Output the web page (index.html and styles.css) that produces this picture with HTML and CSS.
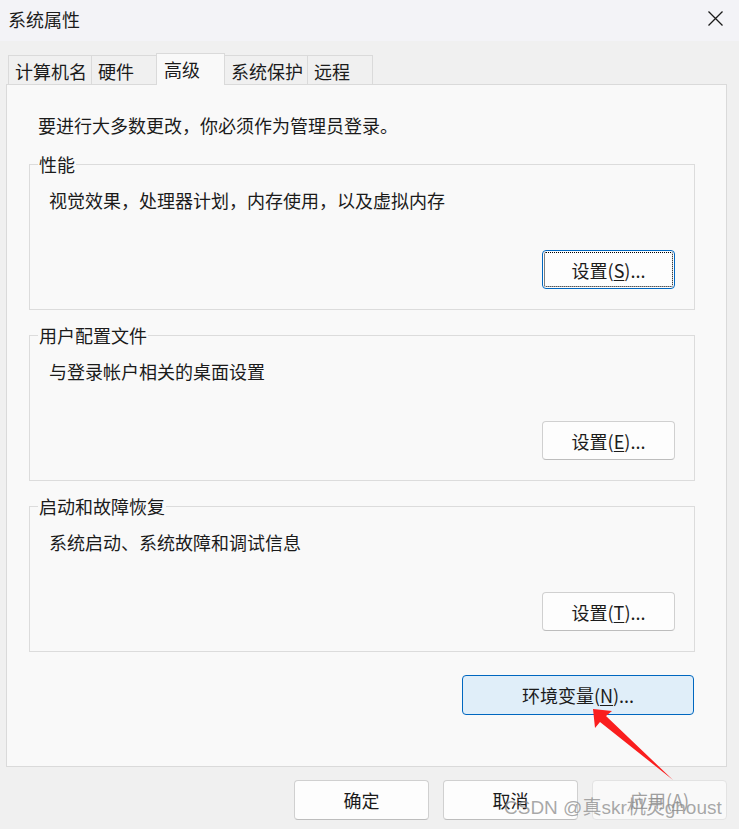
FILE: index.html
```html
<!DOCTYPE html>
<html lang="zh-CN">
<head>
<meta charset="utf-8">
<title>系统属性</title>
<link rel="stylesheet" href="styles.css">
</head>
<body>
<div class="window">
  <header class="titlebar">
    <span class="title">系统属性</span>
    <span class="close" aria-label="关闭">
      <svg width="15" height="15" viewBox="0 0 15 15"><path d="M0.5 0.5 L14.5 14.5 M14.5 0.5 L0.5 14.5" stroke="#1a1a1a" stroke-width="1.3" fill="none"/></svg>
    </span>
  </header>

  <nav class="tabs">
    <div class="tab">计算机名</div>
    <div class="tab">硬件</div>
    <div class="tab active">高级</div>
    <div class="tab">系统保护</div>
    <div class="tab">远程</div>
  </nav>

  <main class="panel">
    <p class="intro">要进行大多数更改，你必须作为管理员登录。</p>

    <fieldset class="group">
      <legend>性能</legend>
      <p class="desc">视觉效果，处理器计划，内存使用，以及虚拟内存</p>
      <div class="actions"><button class="btn focused">设置(<u>S</u>)...</button></div>
    </fieldset>

    <fieldset class="group">
      <legend>用户配置文件</legend>
      <p class="desc">与登录帐户相关的桌面设置</p>
      <div class="actions"><button class="btn">设置(<u>E</u>)...</button></div>
    </fieldset>

    <fieldset class="group">
      <legend>启动和故障恢复</legend>
      <p class="desc">系统启动、系统故障和调试信息</p>
      <div class="actions"><button class="btn">设置(<u>T</u>)...</button></div>
    </fieldset>

    <div class="env-row"><button class="btn env">环境变量(<u>N</u>)...</button></div>
  </main>

  <footer class="footer">
    <button class="btn dlg">确定</button>
    <button class="btn dlg">取消</button>
    <button class="btn dlg" disabled>应用(<u>A</u>)</button>
  </footer>

  <svg class="arrow" width="739" height="829" viewBox="0 0 739 829">
    <polygon points="593,709 612,711 606,716 673,780 600,722 595,728" fill="#fa1e1e"/>
  </svg>
  <div class="watermark">CSDN @真skr机灵ghoust</div>
</div>
</body>
</html>
```

FILE: styles.css
```css
* { box-sizing: border-box; }

html, body {
  margin: 0;
  padding: 0;
}

body {
  background: #f0f0f0;
  font-family: "Noto Sans CJK SC", "Noto Sans", sans-serif;
  font-size: 18px;
  color: #1b1b1b;
}

.window {
  position: relative;
  width: 739px;
  height: 829px;
  overflow: hidden;
  background: #f0f0f0;
}

.titlebar {
  height: 41px;
  background: #f3f3f7;
  display: flex;
  justify-content: space-between;
  align-items: flex-start;
  padding: 7px 16px 0 8px;
}

.title {
  line-height: 24px;
}

.close {
  display: block;
  margin-top: 4px;
  width: 15px;
  height: 15px;
}

.close svg { display: block; }

.tabs {
  display: flex;
  align-items: flex-end;
  height: 43px;
  padding-left: 8px;
}

.tab {
  height: 29px;
  min-width: 66px;
  padding: 0 4px 0 6px;
  border: 1px solid #dadada;
  border-bottom: none;
  margin-right: -1px;
  background: #f0f0f0;
  display: flex;
  align-items: center;
  line-height: 24px;
  padding-top: 1px;
}

.tab.active {
  height: 32px;
  min-width: 69px;
  background: #f9f9f9;
  position: relative;
  z-index: 1;
  margin-bottom: -1px;
  padding-left: 7px;
  padding-top: 0;
  padding-bottom: 2px;
}

.panel {
  margin: 0 12px 0 6px;
  background: #f9f9f9;
  border: 1px solid #dadada;
  padding: 28px 31px 51px 22px;
}

.intro {
  margin: 0 0 17px 9px;
  line-height: 24px;
}

.group {
  margin: 0 0 15px 0;
  padding: 0 19px 20px 8px;
  border: 1px solid #dcdcdc;
  min-inline-size: 0;
}

.group legend {
  padding: 0 1px;
  line-height: 20px;
}

.desc {
  margin: 14px 0 0 11px;
  line-height: 24px;
}

.actions {
  display: flex;
  justify-content: flex-end;
  margin-top: 38px;
}

.btn {
  font-family: "Noto Sans CJK SC", "Noto Sans", sans-serif;
  font-size: 18px;
  color: #1b1b1b;
  height: 39px;
  width: 133px;
  background: #fdfdfd;
  border: 1px solid #d0d0d0;
  border-bottom-color: #bdbdbd;
  border-radius: 4px;
  padding: 0;
  line-height: 24px;
}

.btn u {
  text-underline-offset: 2px;
}

.btn.focused {
  border: 1.5px solid #0067c0;
  outline: 1px dotted #000;
  outline-offset: -3px;
}

.group:last-of-type {
  margin-bottom: 0;
}

.env-row {
  display: flex;
  justify-content: flex-end;
  margin-top: 23px;
  padding-right: 1px;
}

.btn.env {
  width: 232px;
  height: 40px;
  background: #e0eef9;
  border: 1px solid #0067c0;
}

.footer {
  display: flex;
  justify-content: flex-end;
  gap: 14px;
  margin-top: 13px;
  padding-right: 12px;
}

.btn.dlg {
  width: 135px;
  height: 40px;
}

.btn.dlg:disabled {
  background: #f9f9f9;
  border-color: #e3e3e3;
  color: #a0a0a0;
}

.arrow {
  position: absolute;
  left: 0;
  top: 0;
  pointer-events: none;
}

.watermark {
  position: absolute;
  left: 504px;
  top: 796px;
  font-family: "Liberation Sans", "Noto Sans CJK SC", sans-serif;
  font-size: 19px;
  line-height: 24px;
  color: rgba(140, 140, 140, 0.75);
  white-space: nowrap;
  pointer-events: none;
}
```
